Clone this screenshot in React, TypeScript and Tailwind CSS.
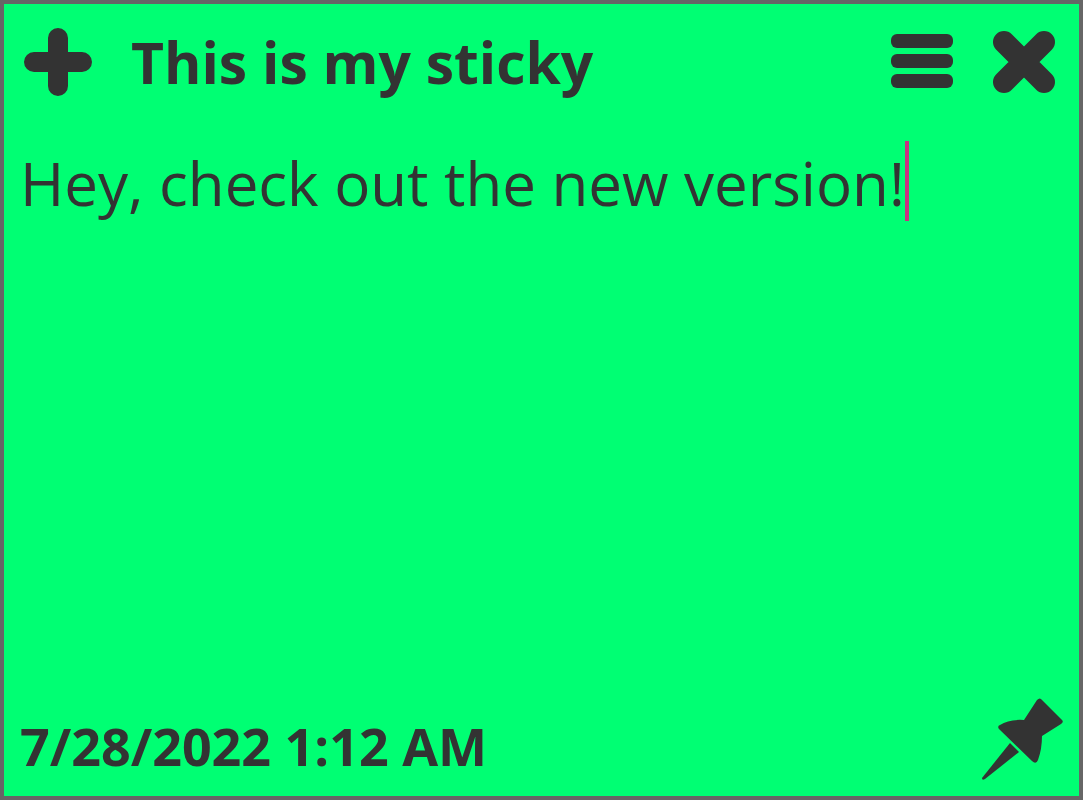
import { useState } from 'react';

const PlusIcon = () => (
  <svg viewBox="0 0 70 70" className="w-[70px] h-[70px]" fill="none" stroke="currentColor" strokeWidth="20" strokeLinecap="round" aria-hidden="true">
    <path d="M35 11v48M11 35h48" />
  </svg>
);

const MenuIcon = () => (
  <svg viewBox="0 0 64 60" className="w-16 h-[60px]" fill="currentColor" aria-hidden="true">
    <rect x="1" y="2" width="62" height="14" rx="6" />
    <rect x="1" y="22" width="62" height="14" rx="6" />
    <rect x="1" y="42" width="62" height="14" rx="6" />
  </svg>
);

const CloseIcon = () => (
  <svg viewBox="0 0 64 64" className="w-16 h-16" fill="none" stroke="currentColor" strokeWidth="22" strokeLinecap="round" aria-hidden="true">
    <path d="M12 12l40 40M52 12L12 52" />
  </svg>
);

const PinIcon = () => (
  <svg viewBox="0 0 84 84" className="w-[84px] h-[84px]" fill="currentColor" aria-hidden="true">
    <path d="M58 2q3-3 5 0l20 20q2 2-1 4L63 38q0 13-4 24-2 5-6 1L20 31q-2-3 1-4 9-6 24-5z" />
    <path d="M31 45l9 9L6 81q-3 2-3-1z" />
  </svg>
);

export default function App() {
  const [text, setText] = useState('Hey, check out the new version!');

  return (
    <main className="min-h-screen flex flex-col border-4 border-[#666666] bg-[#00ff73] text-[#333333] font-['Open_Sans','Noto_Sans',sans-serif]">
      <header className="flex items-center pl-[19px] pr-[23px] pt-4">
        <button type="button" aria-label="New note" className="shrink-0">
          <PlusIcon />
        </button>
        <h1 className="flex-1 min-w-0 truncate pl-[38px] text-[57px] leading-[84px] font-bold">This is my sticky</h1>
        <div className="flex shrink-0 items-center gap-[38px]">
          <button type="button" aria-label="Menu">
            <MenuIcon />
          </button>
          <button type="button" aria-label="Close">
            <CloseIcon />
          </button>
        </div>
      </header>

      {/* Note body, the caret bar follows the text */}
      <div className="flex-1 flex items-start px-4 pt-[37px]">
        <textarea
          aria-label="Note text"
          rows={1}
          value={text}
          onChange={(e) => setText(e.target.value)}
          spellCheck={false}
          className="field-sizing-content max-w-full resize-none overflow-hidden bg-transparent text-[60px] leading-[84px] caret-transparent outline-none"
        />
        <span className="w-1 h-20 shrink-0 bg-[#c83282]" />
      </div>

      <footer className="flex items-center justify-between pl-4 pr-4 pb-[14px]">
        <time dateTime="2022-07-28T01:12" className="pt-3 text-[52px] leading-[72px] font-bold">
          7/28/2022 1:12 AM
        </time>
        <button type="button" aria-label="Pin note">
          <PinIcon />
        </button>
      </footer>
    </main>
  );
}
